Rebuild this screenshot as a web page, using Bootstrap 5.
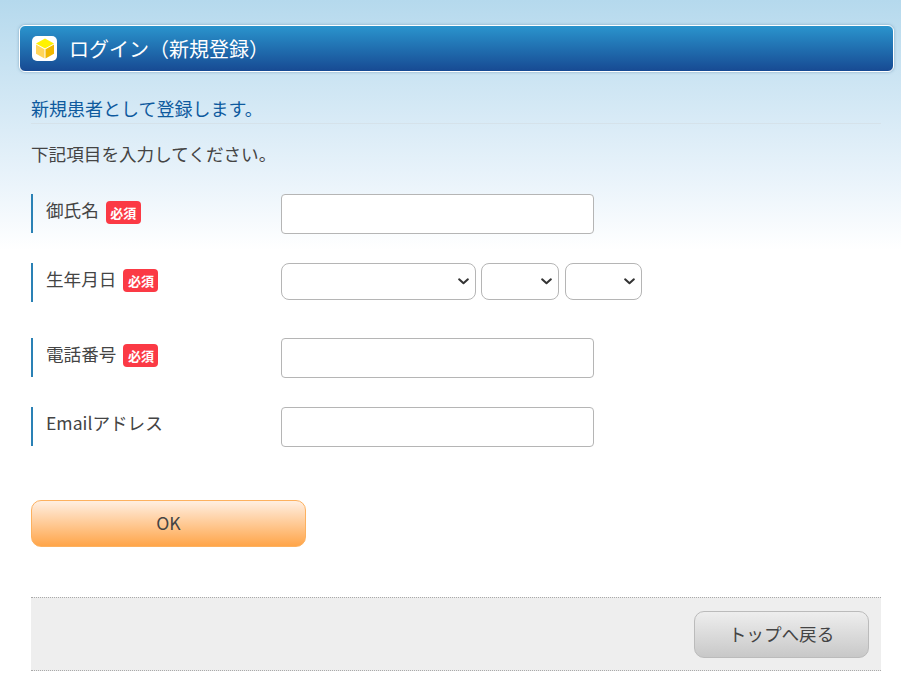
<!DOCTYPE html>
<html lang="ja">
<head>
<meta charset="utf-8">
<title>ログイン（新規登録）</title>
<link href="https://cdn.jsdelivr.net/npm/bootstrap@5.3.0/dist/css/bootstrap.min.css" rel="stylesheet">
<style>
html,body{height:100%}
body{font-family:"Noto Sans CJK JP","Open Sans",sans-serif;font-size:17.6px;color:#444;line-height:1.5;
  background:linear-gradient(to bottom,#b5d9ed 0,#ebf4fb 185px,#fff 250px) no-repeat #fff;overflow:hidden}
.pg{padding:25px 7px 0 19px}
.hdbar{height:47px;border:1px solid #fff;border-radius:6px;background:linear-gradient(to bottom,#2a94cd,#174a93);box-shadow:0 0 3px rgba(60,110,150,.5);padding-left:12px;color:#fff;font-size:20px;gap:12px}
.ico{width:25px;height:25px;background:#fff;border-radius:5px}
.inner{padding:0 0 0 12px;width:862px}
.lead-line{margin-top:24px;height:28px;color:#0e5a9e;border-bottom:1px solid #d5e2ea;line-height:25px;width:850px;font-size:18px}
.intro{margin-top:17px;height:26px;line-height:26px;margin-bottom:27px}
.frow{display:flex;align-items:flex-start}
.gap-a{margin-top:29px}
.gap-b{margin-top:36px}
.flabel{width:250px;border-left:2px solid #2a81b5;height:39px;padding-left:13px;display:flex;align-items:center;gap:7px;padding-bottom:6px}
.req{background:#fb3a45;color:#fff;font-size:13px;font-weight:700;border-radius:4px;width:35px;height:23px;display:flex;align-items:center;justify-content:center;margin-top:2px}
.first .req{margin-top:4px}
.fin{width:313px;height:40px;border:1px solid #b5b5b5;border-radius:4px;background:#fff;padding:0 8px}
.fsel{height:37px;border:1px solid #b5b5b5;border-radius:8px;padding:0 8px;background-color:#fff;color:#333;
  background-image:url("data:image/svg+xml,%3csvg xmlns='http://www.w3.org/2000/svg' viewBox='0 0 12 8'%3e%3cpath fill='none' stroke='%23333' stroke-width='2.2' stroke-linecap='round' stroke-linejoin='round' d='M1.2 1.5 6 6l4.800-4.500'/%3e%3c/svg%3e");
  background-position:right 6px center;background-size:11px 7.300px}
.s1{width:195px;margin-right:5px}.s2{width:78px;margin-right:6px}.s3{width:77px}
.okbtn{width:275px;height:47px;border:1px solid #fdb15f;border-radius:10px;background:linear-gradient(to bottom,#ffefe2,#ffa549);color:#444;font-size:17.6px;padding:0;margin-top:53px}
.foot{width:850px;height:74px;margin-top:50px;background:#eee;border-top:1px dotted #aaa;border-bottom:1px dotted #aaa;padding-right:12px}
.backbtn{width:175px;height:47px;border:1px solid #bbb;border-radius:10px;background:linear-gradient(to bottom,#eee,#c8c8c8);color:#444;font-size:17.6px;padding:0}
</style>
</head>
<body>
<div class="pg">
  <div class="hdbar d-flex align-items-center">
    <span class="ico d-flex align-items-center justify-content-center">
      <svg width="20" height="21" viewBox="0 0 20 21"><polygon points="10,0.500 19,5.500 10,10.500 1,5.500" fill="#fff200"/><polygon points="1,6.500 9.500,11.200 9.500,20.500 1,15.800" fill="#ffd55a"/><polygon points="19,6.500 10.500,11.200 10.500,20.500 19,15.800" fill="#f0b800"/></svg>
    </span>
    <span>ログイン（新規登録）</span>
  </div>
  <div class="inner">
    <div class="lead-line">新規患者として登録します。</div>
    <div class="intro">下記項目を入力してください。</div>
    <div class="frow first"><div class="flabel"><span>御氏名</span><span class="req">必須</span></div><input class="form-control fin" type="text"></div>
    <div class="frow gap-a"><div class="flabel"><span>生年月日</span><span class="req">必須</span></div>
      <div class="d-flex"><select class="form-select fsel s1"></select><select class="form-select fsel s2"></select><select class="form-select fsel s3"></select></div></div>
    <div class="frow gap-b"><div class="flabel"><span>電話番号</span><span class="req">必須</span></div><input class="form-control fin" type="tel"></div>
    <div class="frow gap-a"><div class="flabel"><span>Emailアドレス</span></div><input class="form-control fin" type="email"></div>
    <button class="btn okbtn d-block" type="button">OK</button>
    <div class="foot d-flex align-items-center justify-content-end"><button class="btn backbtn" type="button">トップへ戻る</button></div>
  </div>
</div>
<script src="https://cdn.jsdelivr.net/npm/bootstrap@5.3.0/dist/js/bootstrap.bundle.min.js"></script>
</body>
</html>
